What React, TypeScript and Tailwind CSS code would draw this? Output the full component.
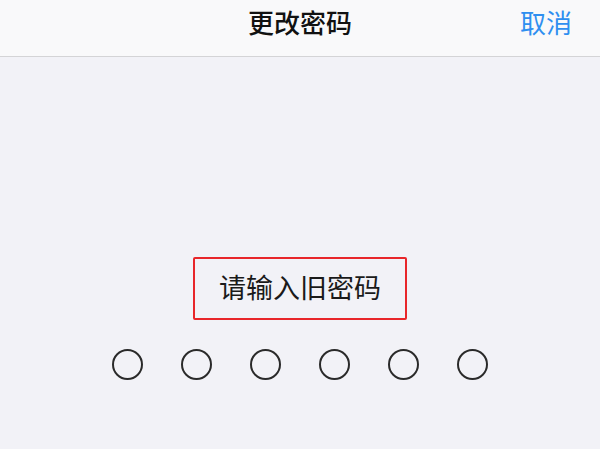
import React from 'react';

const cjk = { fontFamily: '"Noto Sans CJK SC", "Noto Sans", sans-serif' };

export default function App() {
  return (
    <div className="flex h-[449px] w-[600px] flex-col bg-[#f2f2f7]" style={cjk}>
      <header className="relative flex h-[57px] shrink-0 items-start justify-center border-b border-[#d4d4d6] bg-[#f9f9fa] pt-[9px]">
        <h1 className="text-[26px] font-medium leading-none text-[#111]">更改密码</h1>
        <button className="absolute right-[28px] top-[9px] text-[26px] leading-none text-[#2f8ff0]">取消</button>
      </header>
      <main className="flex flex-col items-center pt-[200px]">
        <div className="flex h-[63px] w-[214px] items-center justify-center rounded-[2px] border-2 border-[#e8262a] pb-[5px]">
          <span className="text-[27px] leading-none text-[#1a1a1a]">请输入旧密码</span>
        </div>
        <div className="mt-[29px] flex gap-[38px]">
          {Array.from({ length: 6 }).map((_, i) => (
            <span key={i} className="h-[31px] w-[31px] rounded-full border-2 border-[#2a2a2a]" />
          ))}
        </div>
      </main>
    </div>
  );
}
